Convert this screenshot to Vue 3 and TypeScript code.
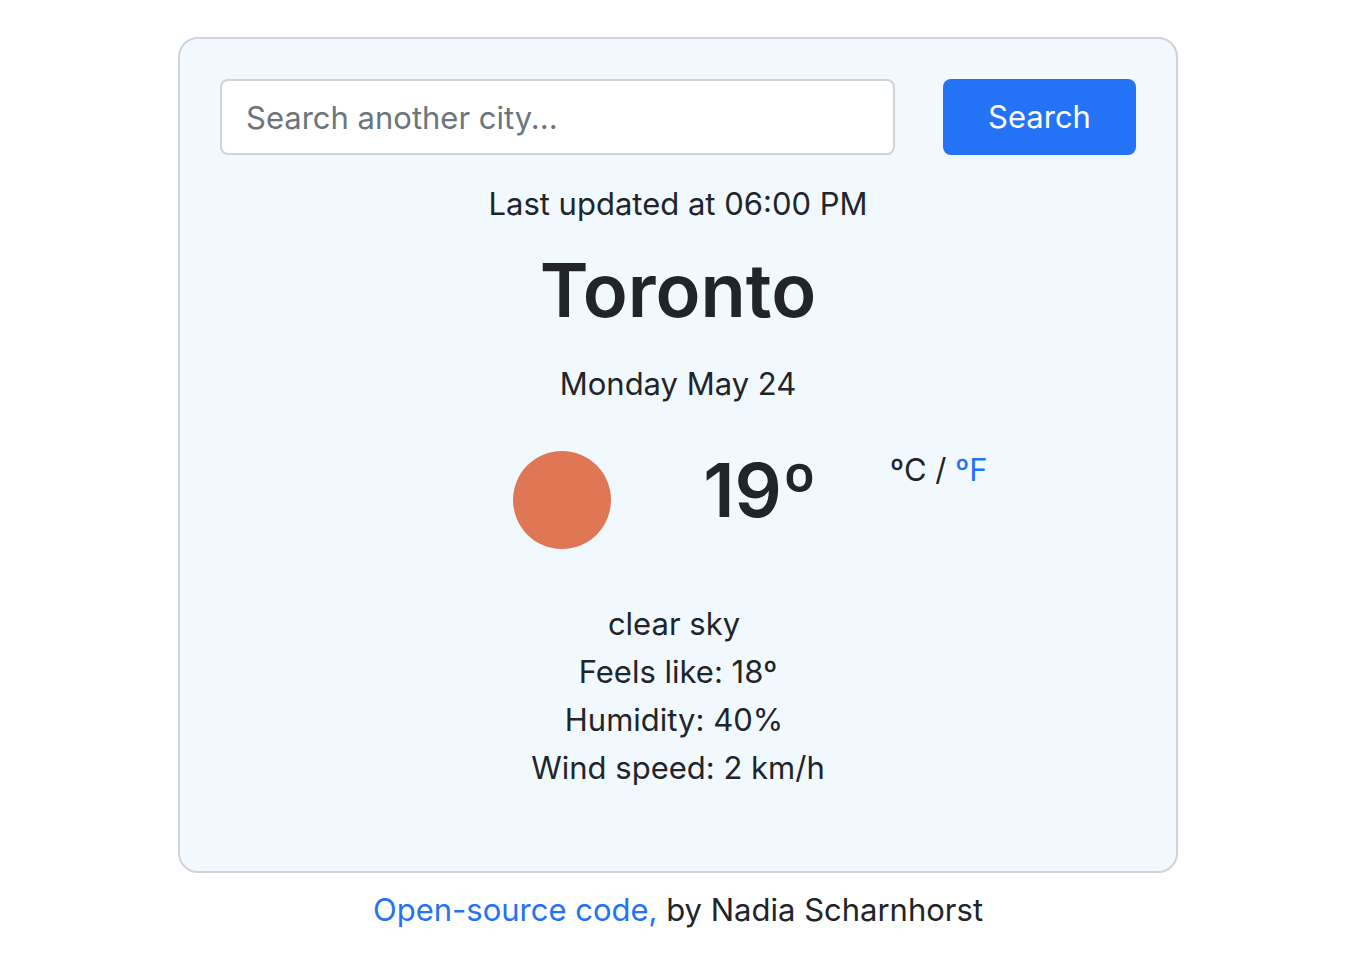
<script setup lang="ts">
import { computed, ref } from 'vue'

type Unit = 'C' | 'F'

const query = ref('')
const unit = ref<Unit>('C')
const weather = {
  city: 'Toronto',
  updated: '06:00 PM',
  date: 'Monday May 24',
  celsius: 19,
  description: 'clear sky',
  feelsLike: 18,
  humidity: 40,
  wind: 2,
}
const temperature = computed(() =>
  unit.value === 'C' ? weather.celsius : Math.round((weather.celsius * 9) / 5 + 32),
)
</script>

<template>
  <div class="page">
    <main class="card">
      <form class="search" @submit.prevent>
        <input v-model="query" class="field" type="search" aria-label="City" placeholder="Search another city..." />
        <button class="submit" type="submit">Search</button>
      </form>
      <p class="updated">Last updated at {{ weather.updated }}</p>
      <h1 class="city">{{ weather.city }}</h1>
      <p class="date">{{ weather.date }}</p>
      <section class="current">
        <svg class="icon" viewBox="0 0 100 100" role="img" aria-label="clear sky">
          <circle cx="50" cy="50" r="49" fill="#df7755" />
        </svg>
        <h2 class="temperature">{{ temperature }}º</h2>
        <div class="units">
          <span v-if="unit === 'C'">ºC</span>
          <a v-else href="#" @click.prevent="unit = 'C'">ºC</a>
          /
          <a v-if="unit === 'C'" href="#" @click.prevent="unit = 'F'">ºF</a>
          <span v-else>ºF</span>
        </div>
      </section>
      <ul class="details">
        <li class="trailing">{{ weather.description }}</li>
        <li>Feels like: {{ weather.feelsLike }}º</li>
        <li class="trailing">Humidity: {{ weather.humidity }}%</li>
        <li>Wind speed: {{ weather.wind }} km/h</li>
      </ul>
    </main>
    <footer class="credit"><a href="#">Open-source code,</a> by Nadia Scharnhorst</footer>
  </div>
</template>

<style>
body {
  background: #fff;
}
</style>

<style scoped>
.page {
  box-sizing: border-box;
  padding: 37px 24px 24px 28px;
  color: #212529;
  font: 31px/48px Inter, "Liberation Sans", sans-serif;
}
.card {
  box-sizing: border-box;
  max-width: 1000px;
  margin: 0 auto;
  padding: 40px 40px 79px;
  border: 2px solid #ced4d9;
  border-radius: 20px;
  background: #f1f8fe;
  text-align: center;
}
.search {
  display: flex;
  gap: 48px;
}
.field {
  box-sizing: border-box;
  flex: 1;
  min-width: 0;
  height: 76px;
  padding: 12px 24px;
  border: 2px solid #ced4d9;
  border-radius: 8px;
  background: #fff;
  color: inherit;
  font: inherit;
  appearance: none;
}
.field::placeholder {
  color: #6c757d;
  opacity: 1;
}
.submit {
  width: 193px;
  padding: 0;
  border: 0;
  border-radius: 8px;
  background: #2472f5;
  color: #fff;
  font: inherit;
  cursor: pointer;
}
.updated,
.date {
  margin: 0;
}
.updated {
  padding-top: 25px;
}
.city,
.temperature {
  font-size: 74px;
  font-weight: 600;
  line-height: 96px;
}
.city {
  margin: 14px 0 22px;
}
.current {
  display: grid;
  grid-template-columns: 392px 88px 120px 1fr;
  align-items: start;
  margin-top: 38px;
}
.icon {
  width: 100px;
  height: 100px;
  margin-top: 4px;
  justify-self: end;
}
.temperature {
  grid-column: 3;
  margin: -4px 0 0;
}
.units {
  padding-left: 70px;
  text-align: left;
}
.details {
  margin: 50px 0 0;
  padding: 0;
  list-style: none;
}
.trailing {
  padding-right: 8px;
}
.credit {
  margin-top: 13px;
  text-align: center;
}
a {
  color: #2472f5;
  text-decoration: none;
}
</style>
